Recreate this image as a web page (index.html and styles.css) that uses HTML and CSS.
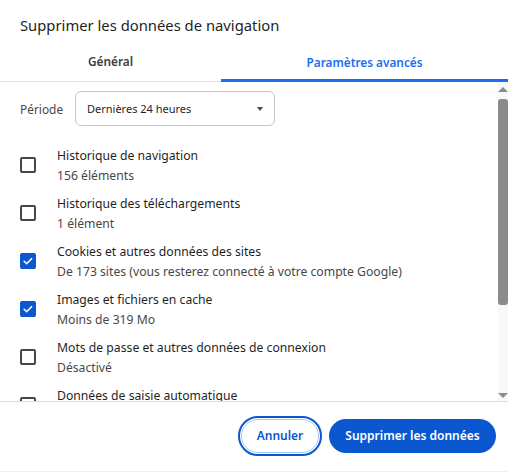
FILE: index.html
```html
<!DOCTYPE html>
<html lang="fr">
<head>
<meta charset="utf-8">
<link rel="stylesheet" href="styles.css">
</head>
<body>
<div class="dialog">
  <h1 class="title">Supprimer les données de navigation</h1>
  <div class="tabs">
    <div class="tab">Général</div>
    <div class="tab active">Paramètres avancés</div>
  </div>
  <div class="body">
    <div class="list">
      <div class="period">
        <span class="period-label">Période</span>
        <div class="select">
          <span>Dernières 24 heures</span>
          <span class="caret"></span>
        </div>
      </div>
      <div class="row">
        <span class="cb"></span>
        <div class="text"><div class="t">Historique de navigation</div><div class="s">156 éléments</div></div>
      </div>
      <div class="row">
        <span class="cb"></span>
        <div class="text"><div class="t">Historique des téléchargements</div><div class="s">1 élément</div></div>
      </div>
      <div class="row">
        <span class="cb checked"><svg viewBox="0 0 16 16" width="16" height="16"><path d="M4.2 8.3l2.4 2.4 5-5" fill="none" stroke="#fff" stroke-width="1.6" stroke-linecap="round" stroke-linejoin="round"/></svg></span>
        <div class="text"><div class="t">Cookies et autres données des sites</div><div class="s">De 173 sites (vous resterez connecté à votre compte Google)</div></div>
      </div>
      <div class="row">
        <span class="cb checked"><svg viewBox="0 0 16 16" width="16" height="16"><path d="M4.2 8.3l2.4 2.4 5-5" fill="none" stroke="#fff" stroke-width="1.6" stroke-linecap="round" stroke-linejoin="round"/></svg></span>
        <div class="text"><div class="t">Images et fichiers en cache</div><div class="s">Moins de 319 Mo</div></div>
      </div>
      <div class="row">
        <span class="cb"></span>
        <div class="text"><div class="t">Mots de passe et autres données de connexion</div><div class="s">Désactivé</div></div>
      </div>
      <div class="row">
        <span class="cb"></span>
        <div class="text"><div class="t">Données de saisie automatique</div><div class="s">Désactivé</div></div>
      </div>
    </div>
    <div class="scrollbar">
      <span class="arrow up"></span>
      <div class="track"><div class="thumb"></div></div>
      <span class="arrow down"></span>
    </div>
  </div>
  <div class="footer">
    <button class="btn cancel">Annuler</button>
    <button class="btn primary">Supprimer les données</button>
  </div>
</div>
</body>
</html>
```
FILE: styles.css
```css
* { box-sizing: border-box; }
html, body { margin: 0; padding: 0; background: #fff; }
body {
  font-family: "Noto Sans", "Open Sans", sans-serif;
  color: #1f1f1f;
  width: 508px;
  height: 472px;
  overflow: hidden;
}
.dialog {
  width: 508px;
  height: 472px;
  display: flex;
  flex-direction: column;
}
.title {
  margin: 0;
  padding: 13px 0 0 20px;
  height: 40px;
  font-size: 14.8px;
  font-weight: 400;
  line-height: 24px;
  color: #1f1f1f;
}
.tabs {
  display: flex;
  height: 42px;
  border-bottom: 1px solid #e3e3e3;
}
.tab {
  width: 221px;
  display: flex;
  align-items: center;
  justify-content: center;
  font-size: 11.8px;
  font-weight: 600;
  color: #3c3c3c;
  padding-top: 1px;
}
.tab.active {
  flex: 1;
  color: #1b6ef3;
  border-bottom: 3px solid #1b6ef3;
  margin-bottom: -1px;
  padding-top: 4px;
}
.body {
  display: flex;
  height: 319px;
  overflow: hidden;
}
.list {
  flex: 1;
  overflow: hidden;
  padding-top: 9px;
}
.period {
  display: flex;
  align-items: center;
  padding-left: 20px;
  height: 35px;
  margin-bottom: 15px;
}
.period-label {
  font-size: 11.9px;
  color: #474747;
  width: 55px;
}
.select {
  width: 200px;
  height: 35px;
  border: 1px solid #c4c7c5;
  border-radius: 6px;
  display: flex;
  align-items: center;
  justify-content: space-between;
  padding: 0 11px 0 11px;
  font-size: 11px;
  color: #1f1f1f;
}
.caret {
  width: 0;
  height: 0;
  border-left: 3.5px solid transparent;
  border-right: 3.5px solid transparent;
  border-top: 4px solid #474747;
}
.row {
  display: flex;
  align-items: center;
  height: 48px;
  padding-left: 20px;
}
.cb {
  width: 16px;
  height: 16px;
  border: 2px solid #474747;
  border-radius: 2px;
  margin-right: 21px;
  flex: none;
  display: flex;
  align-items: center;
  justify-content: center;
}
.cb.checked {
  background: #0b57d0;
  border-color: #0b57d0;
}
.cb svg { flex: none; }
.text { display: flex; flex-direction: column; }
.t {
  font-size: 12.2px;
  line-height: 20px;
  color: #1f1f1f;
}
.s {
  font-size: 12.2px;
  line-height: 19px;
  color: #474747;
}
.scrollbar {
  width: 10px;
  background: #f8f8f8;
  display: flex;
  flex-direction: column;
  align-items: center;
  padding: 5px 0 3px;
}
.arrow {
  width: 0;
  height: 0;
  border-left: 5px solid transparent;
  border-right: 5px solid transparent;
}
.arrow.up { border-bottom: 5px solid #8c8c8c; }
.arrow.down { border-top: 5px solid #8c8c8c; }
.track {
  flex: 1;
  width: 100%;
  padding-top: 7px;
}
.thumb {
  width: 100%;
  height: 206px;
  background: #8b8b8b;
  border-radius: 3px;
}
.footer {
  border-top: 1px solid #dadce0;
  flex: 1;
  display: flex;
  align-items: center;
  justify-content: flex-end;
  gap: 10px;
  padding-right: 12px;
  padding-bottom: 2px;
  border-bottom: 1px solid #f0f0f0;
}
.btn {
  font-family: inherit;
  font-size: 12px;
  font-weight: 600;
  height: 34px;
  border-radius: 17px;
  padding: 0;
  white-space: nowrap;
  cursor: pointer;
}
.cancel {
  width: 78px;
  background: #fff;
  color: #0b57d0;
  border: 1px solid #a8c7fa;
  outline: 2px solid #0b57d0;
  outline-offset: 1px;
}
.primary {
  width: 167px;
  background: #0b57d0;
  color: #fff;
  border: none;
}
```
